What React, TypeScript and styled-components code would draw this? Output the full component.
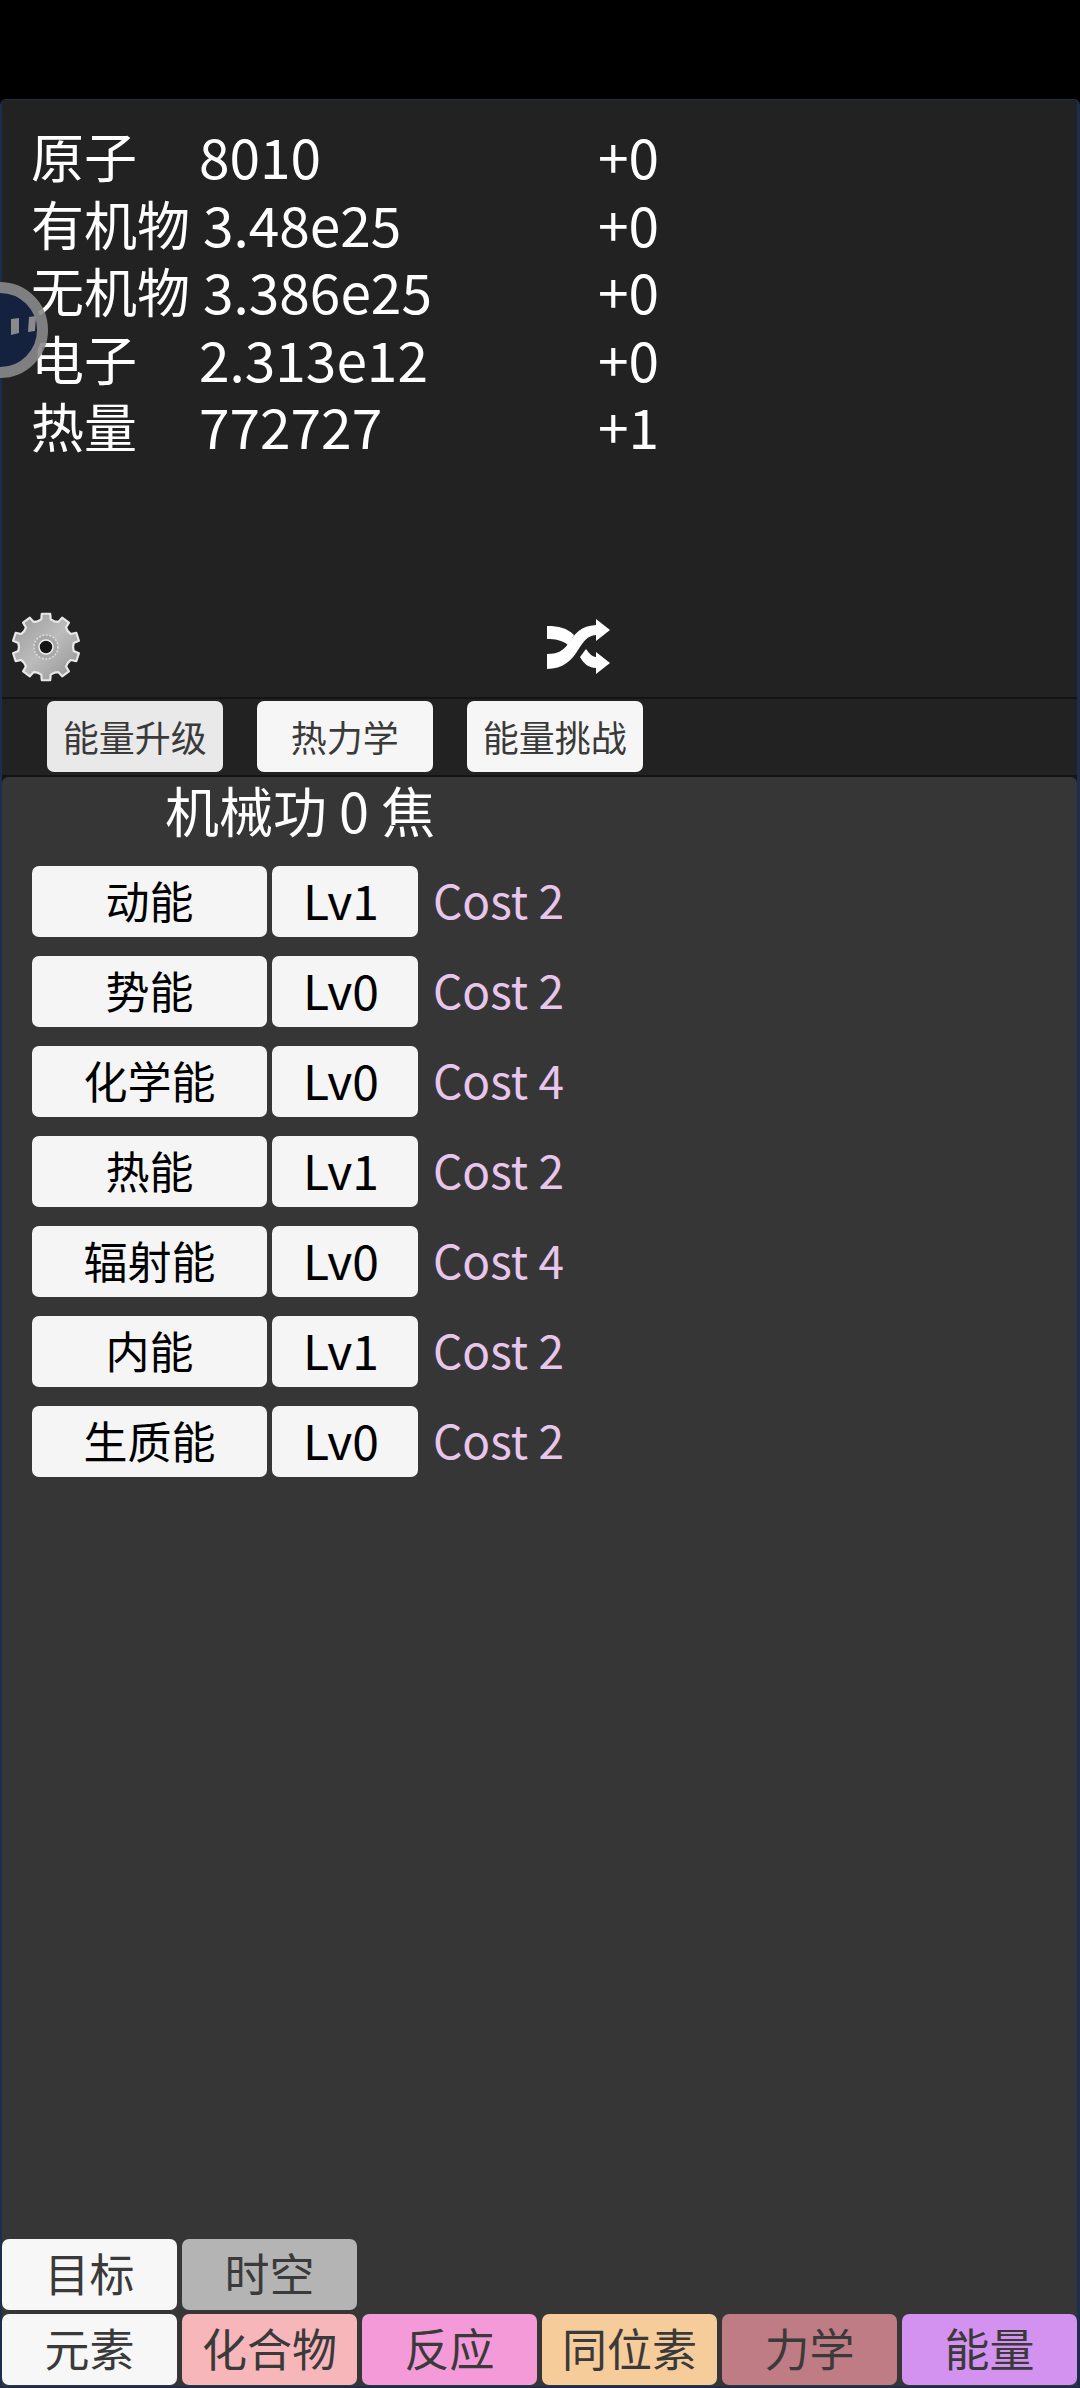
import React from "react";
import styled, { createGlobalStyle } from "styled-components";

const Global = createGlobalStyle`
  html, body { margin: 0; padding: 0; background: #000; }
  body { font-family: "Noto Sans CJK SC", "Noto Sans", sans-serif; }
  * { box-sizing: border-box; }
`;

const Page = styled.div`
  position: relative;
  width: 1080px;
  height: 2388px;
  overflow: hidden;
  display: flex;
  flex-direction: column;
  background: #000;
`;
const TopStrip = styled.div`
  height: 99px;
  flex: none;
  background: #000;
`;
const Frame = styled.div`
  flex: 1;
  display: flex;
  flex-direction: column;
  min-height: 0;
  background: #141414;
  border: 1px solid #1c2d4d;
  border-width: 1px 3px 2px 2px;
  border-radius: 6px 6px 0 0;
`;
const ResourcePanel = styled.section`
  height: 597px;
  flex: none;
  display: flex;
  flex-direction: column;
  padding: 22px 0 0 29px;
  background: #222;
  border-radius: 4px 4px 0 0;
`;
const ResourceTable = styled.div`
  display: grid;
  grid-template-columns: 168px 399px auto;
  grid-auto-rows: 67.5px;
  width: fit-content;
  color: #fff;
  line-height: 67.5px;
`;
const ResourceCell = styled.span<{ $cjk?: boolean; $shift?: boolean }>`
  font-size: ${(p) => (p.$cjk ? "53px" : "55px")};
  font-weight: 400;
  margin-left: ${(p) => (p.$shift ? "4px" : "0")};
`;
const ToolRow = styled.div`
  margin-top: auto;
  margin-bottom: 14px;
  margin-left: -21px;
  display: flex;
  align-items: center;
  height: 72px;
`;
const ShuffleSlot = styled.div`
  margin-left: 465px;
  display: flex;
`;
const TabsBar = styled.nav`
  height: 76px;
  flex: none;
  margin-top: 2px;
  display: flex;
  gap: 34.5px;
  padding: 2px 0 0 45px;
  background: #222;
`;
const SmallTab = styled.button<{ $active?: boolean }>`
  width: 175.5px;
  height: 71px;
  border: 0;
  padding: 0;
  border-radius: 7px;
  background: ${(p) => (p.$active ? "#e9e9e9" : "#f6f6f6")};
  color: #3a3a3a;
  font: 400 36px/69px "Noto Sans CJK SC", sans-serif;
`;
const MainPanel = styled.main`
  flex: 1;
  min-height: 0;
  margin-top: 2px;
  display: flex;
  flex-direction: column;
  background: #363636;
  border-radius: 6px 6px 0 0;
`;
const Title = styled.h1`
  margin: 0 0 0 163px;
  height: 66px;
  color: #fff;
  font-weight: 400;
  font-size: 54px;
  line-height: 66px;
`;
const UpgradeList = styled.div`
  display: flex;
  flex-direction: column;
  gap: 19px;
  margin-top: 23px;
  padding-left: 30px;
`;
const UpgradeRow = styled.div`
  display: flex;
  align-items: center;
  height: 71px;
`;
const NameButton = styled.button`
  width: 235px;
  height: 71px;
  border: 0;
  padding: 0 0 4px;
  border-radius: 7px;
  background: #f5f5f5;
  color: #000;
  font: 400 44px/66px "Noto Sans CJK SC", sans-serif;
`;
const LevelButton = styled(NameButton)`
  width: 146px;
  margin-left: 5px;
  font-size: 48px;
  padding: 0 8px 6px 0;
`;
const Cost = styled.span`
  margin-left: 15px;
  padding-bottom: 6px;
  color: #e8c6ec;
  font-size: 46px;
  line-height: 62px;
`;
const BottomNav = styled.div`
  margin-top: auto;
  display: flex;
  flex-direction: column;
  gap: 4px;
  padding-bottom: 1px;
`;
const NavRow = styled.div`
  display: flex;
  gap: 5px;
`;
const NavButton = styled.button<{ $bg: string }>`
  width: 175px;
  height: 71px;
  border: 0;
  padding: 0 0 3px;
  border-radius: 7px;
  background: ${(p) => p.$bg};
  color: #3a3a3a;
  font: 400 45px/68px "Noto Sans CJK SC", sans-serif;
`;
const FloatingBall = styled.div`
  position: absolute;
  left: -48px;
  top: 282px;
  width: 96px;
  height: 96px;
  pointer-events: none;
`;

const resources = [
  ["原子", "8010", "+0"],
  ["有机物", "3.48e25", "+0"],
  ["无机物", "3.386e25", "+0"],
  ["电子", "2.313e12", "+0"],
  ["热量", "772727", "+1"],
];
const upgrades = [
  ["动能", "Lv1", "Cost 2"],
  ["势能", "Lv0", "Cost 2"],
  ["化学能", "Lv0", "Cost 4"],
  ["热能", "Lv1", "Cost 2"],
  ["辐射能", "Lv0", "Cost 4"],
  ["内能", "Lv1", "Cost 2"],
  ["生质能", "Lv0", "Cost 2"],
];
const nav = [
  ["元素", "#f7f7f7"],
  ["化合物", "#f6b6ba"],
  ["反应", "#f59ad9"],
  ["同位素", "#f6cc9b"],
  ["力学", "#c07c85"],
  ["能量", "#d391f0"],
];

const gearPath = (() => {
  const teeth = 10;
  const cx = 36;
  const cy = 36;
  const pts: string[] = [];
  for (let i = 0; i < teeth; i++) {
    const a = (i / teeth) * Math.PI * 2 - Math.PI / 2;
    const step = (Math.PI * 2) / teeth;
    const seq: [number, number][] = [
      [-0.5, 27],
      [-0.27, 28],
      [-0.2, 33.5],
      [0.2, 33.5],
      [0.27, 28],
      [0.5, 27],
    ];
    seq.forEach(([o, r]) => {
      const t = a + o * step;
      pts.push(`${(cx + r * Math.cos(t)).toFixed(2)} ${(cy + r * Math.sin(t)).toFixed(2)}`);
    });
  }
  return `M${pts.join("L")}Z`;
})();

const Gear = () => (
  <svg width="72" height="72" viewBox="0 0 72 72" aria-hidden="true">
    <defs>
      <linearGradient id="gearFill" x1="0" y1="0" x2="1" y2="1">
        <stop offset="0" stopColor="#999" />
        <stop offset="0.5" stopColor="#bcbcbc" />
        <stop offset="1" stopColor="#929292" />
      </linearGradient>
    </defs>
    <path d={gearPath} fill="url(#gearFill)" stroke="#e8e8e8" strokeWidth="2.2" strokeLinejoin="round" />
    <circle cx="36" cy="36" r="12" fill="#a8a8a8" stroke="#dcdcdc" strokeWidth="1.5" strokeDasharray="2 1.5" />
    <circle cx="36" cy="36" r="7" fill="#141414" stroke="#f0f0f0" strokeWidth="1.5" />
  </svg>
);

const Shuffle = () => (
  <svg width="64" height="56" viewBox="0 0 64 56" aria-hidden="true">
    <path
      fill="#fff"
      d="M0 7 C12 7 20 9 27 16 L21 26 C15 21 8 20 0 20 Z M33 38 L39 30 C42 34 45 38 49 38 L49 33 L63 44 L49 55 L49 49 C42 49 37 45 33 38 Z"
    />
    <path
      fill="#fff"
      d="M0 35 C10 35 16 32 21 25 C28 14 34 7 49 6 L49 0 L63 11 L49 22 L49 16 C40 17 37 22 31 31 C25 41 16 50 0 50 Z"
    />
  </svg>
);

const Ball = () => (
  <svg width="96" height="96" viewBox="0 0 96 96" aria-hidden="true">
    <circle cx="48" cy="48" r="42.5" fill="#14223f" stroke="#8a8a8a" strokeOpacity="0.9" strokeWidth="11" />
    <path d="M59 37 L67 36 L67 51 L59 53 Z" fill="#8a8a8a" />
    <path d="M77 35 L84 34 L83 49 L76 50 Z" fill="#8a8a8a" />
  </svg>
);

export default function App() {
  return (
    <Page>
      <Global />
      <TopStrip />
      <Frame>
        <ResourcePanel>
          <ResourceTable>
            {resources.map(([name, value, rate]) => (
              <React.Fragment key={name}>
                <ResourceCell $cjk>{name}</ResourceCell>
                <ResourceCell $shift={name.length === 3}>{value}</ResourceCell>
                <ResourceCell>{rate}</ResourceCell>
              </React.Fragment>
            ))}
          </ResourceTable>
          <ToolRow>
            <Gear />
            <ShuffleSlot>
              <Shuffle />
            </ShuffleSlot>
          </ToolRow>
        </ResourcePanel>
        <TabsBar>
          <SmallTab $active>能量升级</SmallTab>
          <SmallTab>热力学</SmallTab>
          <SmallTab>能量挑战</SmallTab>
        </TabsBar>
        <MainPanel>
          <Title>机械功 0 焦</Title>
          <UpgradeList>
            {upgrades.map(([name, level, cost]) => (
              <UpgradeRow key={name}>
                <NameButton>{name}</NameButton>
                <LevelButton>{level}</LevelButton>
                <Cost>{cost}</Cost>
              </UpgradeRow>
            ))}
          </UpgradeList>
          <BottomNav>
            <NavRow>
              <NavButton $bg="#f7f7f7">目标</NavButton>
              <NavButton $bg="#b4b4b4">时空</NavButton>
            </NavRow>
            <NavRow>
              {nav.map(([label, bg]) => (
                <NavButton key={label} $bg={bg}>
                  {label}
                </NavButton>
              ))}
            </NavRow>
          </BottomNav>
        </MainPanel>
      </Frame>
      <FloatingBall>
        <Ball />
      </FloatingBall>
    </Page>
  );
}
